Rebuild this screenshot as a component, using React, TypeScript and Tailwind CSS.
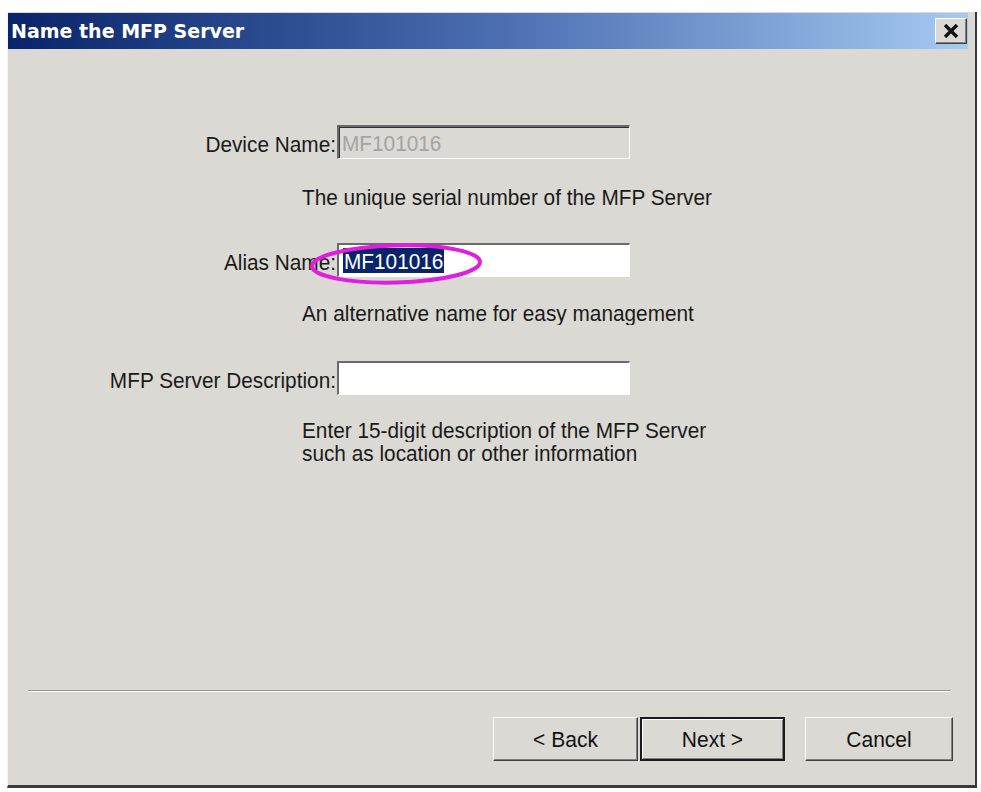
import React from "react";

const raised =
  "border border-t-white border-l-white border-r-[#404040] border-b-[#404040] shadow-[inset_-1px_-1px_0_#808080]";

function Btn({ label, def }: { label: string; def?: boolean }) {
  return (
    <div
      className={
        "h-[44px] flex items-center justify-center bg-[#dbd9d3] text-[21px] text-[#111] " +
        (def
          ? "border-2 border-[#1a1a1a] shadow-[inset_1px_1px_0_#fff,inset_-1px_-1px_0_#808080]"
          : raised)
      }
    >
      <span className="inline-block scale-y-[1.08]">{label}</span>
    </div>
  );
}

function Field({ label, children }: { label: string; children: React.ReactNode }) {
  return (
    <div className="flex items-center h-[34px]">
      <div className="w-[329px] text-right pr-[1px] whitespace-nowrap pt-[4px]">
        <span className="inline-block scale-y-[1.08]">{label}</span>
      </div>
      <div className="w-[293px] h-[34px] border-t-2 border-l-2 border-b border-r border-t-[#6a6a6a] border-l-[#6a6a6a] border-b-white border-r-white shadow-[inset_1px_1px_0_#303030] flex items-center overflow-hidden">
        {children}
      </div>
    </div>
  );
}

export default function App() {
  return (
    <div
      className="w-[981px] h-[792px] bg-white pt-[12px] pl-[7px] overflow-hidden"
      style={{ fontFamily: '"Liberation Sans", Arial, sans-serif' }}
    >
      <div className="w-[970px] h-[776px] bg-[#dbd9d3] border-l border-l-[#f4f4f0] border-r-2 border-b-[3px] border-r-[#3a3a3a] border-b-[#3a3a3a] flex flex-col">
        {/* Title bar */}
        <div className="h-[36px] mr-[7px] mt-[1px] flex items-center justify-between bg-linear-to-r from-[#0a246a] via-[#4a6cb0] to-[#a6caf0] pl-[3px] pr-[1px]">
          <span
            className="text-white font-bold text-[19px] leading-none"
            style={{ fontFamily: '"DejaVu Sans", Verdana, sans-serif' }}
          >
            Name the MFP Server
          </span>
          <div className={"w-[32px] h-[26px] bg-[#dbd9d3] flex items-center justify-center " + raised}>
            <svg width="16" height="14" viewBox="0 0 16 14">
              <path d="M2 1 L14 13 M14 1 L2 13" stroke="#111" strokeWidth="3.4" />
            </svg>
          </div>
        </div>

        {/* Body */}
        <div className="flex-1 flex flex-col text-[20.8px] text-[#1a1a1a]">
          <div className="pt-[76px] flex flex-col">
            <Field label="Device Name:">
              <span className="pl-[3px] text-[#a4a4a4] inline-block scale-y-[1.08]">MF101016</span>
            </Field>
            <div className="pl-[294px] mt-[26px] leading-[24px]">
              <span className="inline-block scale-y-[1.08]">The unique serial number of the MFP Server</span>
            </div>

            <div className="relative mt-[34px]">
              <Field label="Alias Name:">
                <div className="w-full h-full bg-white flex items-center">
                  <span className="ml-[4px] bg-[#0a246a] text-white leading-[25px] px-[1px]">
                    <span className="inline-block scale-y-[1.08]">MF101016</span>
                  </span>
                </div>
              </Field>
              <svg
                className="absolute left-[300px] top-[-2px] pointer-events-none"
                width="180"
                height="46"
                viewBox="0 0 180 46"
              >
                <ellipse
                  cx="88"
                  cy="23"
                  rx="84"
                  ry="18.5"
                  fill="none"
                  stroke="#e01ee0"
                  strokeWidth="4"
                  transform="rotate(-1.5 88 23)"
                />
              </svg>
            </div>
            <div className="pl-[294px] mt-[24px] leading-[24px]">
              <span className="inline-block scale-y-[1.08]">An alternative name for easy management</span>
            </div>

            <div className="mt-[36px]">
              <Field label="MFP Server Description:">
                <div className="w-full h-full bg-white" />
              </Field>
            </div>
            <div className="pl-[294px] mt-[23px] leading-[23px]">
              <div>
                <span className="inline-block scale-y-[1.08]">Enter 15-digit description of the MFP Server</span>
              </div>
              <div>
                <span className="inline-block scale-y-[1.08]">such as location or other information</span>
              </div>
            </div>
          </div>

          <div className="flex-1" />

          <div className="ml-[20px] mr-[24px] border-t border-t-[#9a9894] border-b border-b-white" />

          <div className="flex justify-end mt-[25px] mb-[24px] mr-[22px]">
            <div className="w-[145px]">
              <Btn label="< Back" />
            </div>
            <div className="w-[145px] ml-[2px]">
              <Btn label="Next >" def />
            </div>
            <div className="w-[148px] ml-[20px]">
              <Btn label="Cancel" />
            </div>
          </div>
        </div>
      </div>
    </div>
  );
}
